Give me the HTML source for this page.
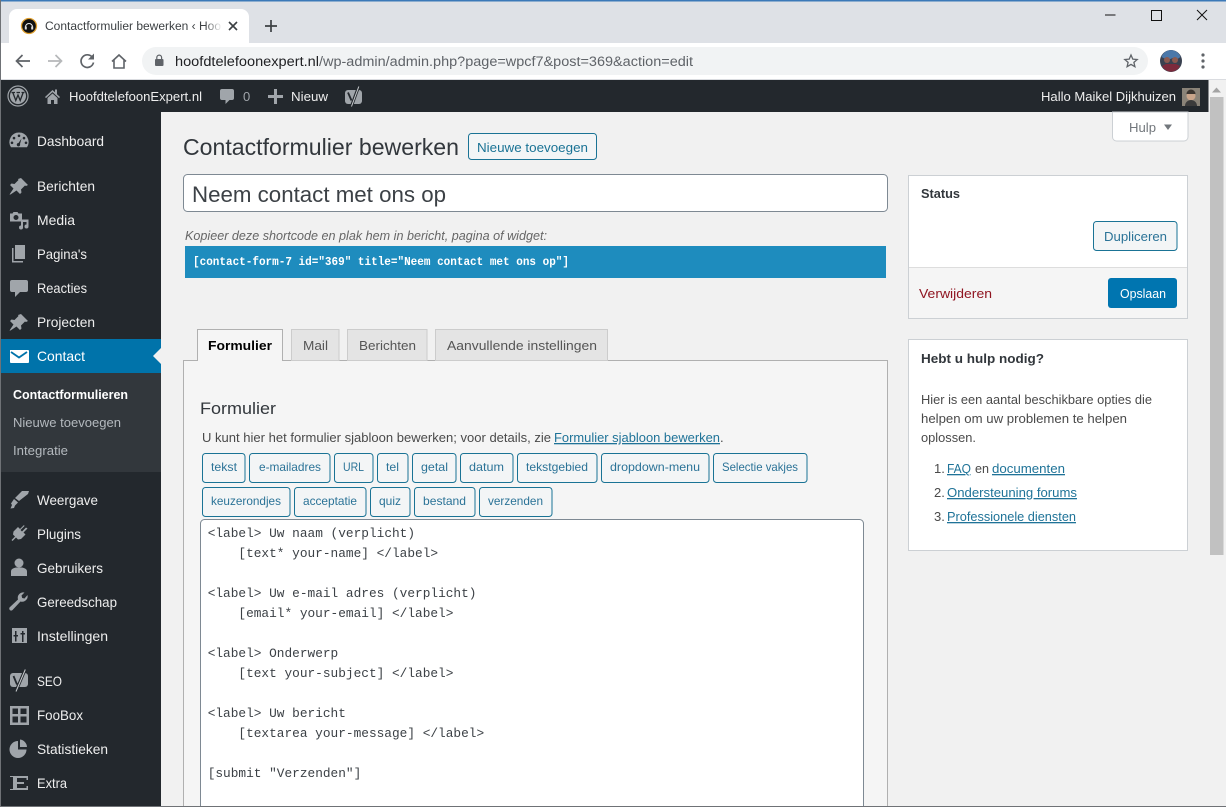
<!DOCTYPE html>
<html><head><meta charset="utf-8"><title>Contactformulier bewerken</title>
<style>
html,body{margin:0;padding:0;background:#f1f1f1;overflow:hidden}
svg{display:block;font-family:"Liberation Sans",sans-serif}
.m{font-size:14px;fill:#eeeeee}
.s{font-size:13px;fill:#b4b9be}
.i{fill:#a0a5aa}
.b{font-size:12px;fill:#2b7397}
.btn{fill:#f3f5f6;stroke:#1a7395}
.t{font-size:13px;fill:#4a4a4a}
.l{font-size:13px;fill:#1f7398;text-decoration:underline}
.c{font-family:"Liberation Mono",monospace;font-size:12.8px;fill:#3c4146}
</style></head><body>
<svg xmlns="http://www.w3.org/2000/svg" width="1226" height="807" viewBox="0 0 1226 807">
<defs><linearGradient id="fade" x1="0" x2="1"><stop offset="0" stop-color="#fff" stop-opacity="0"/><stop offset="1" stop-color="#fff"/></linearGradient></defs>
<rect width="1226" height="807" fill="#f1f1f1"/>
<!-- chrome -->
<rect width="1226" height="43" fill="#dee1e6"/>
<rect width="1226" height="1.5" fill="#3b79b8"/>
<path d="M9 43V17a8 8 0 0 1 8-8H241a8 8 0 0 1 8 8V43Z" fill="#fff"/>
<circle cx="29" cy="26" r="7.500" fill="#111" stroke="#e0a030" stroke-width="1.300"/>
<path d="M25.500 27a3.500 3.500 0 0 1 7 0" fill="none" stroke="#eee" stroke-width="1"/>
<rect x="24.800" y="26.500" width="2" height="3" fill="#ddd"/><rect x="31.200" y="26.500" width="2" height="3" fill="#ddd"/>
<text x="45" y="30" font-size="12.300" fill="#3c4043" textLength="176" lengthAdjust="spacingAndGlyphs">Contactformulier bewerken ‹ Hoo</text>
<rect x="205" y="18" width="17" height="16" fill="url(#fade)"/>
<path d="M229 22l8 8M237 22l-8 8" stroke="#3c4043" stroke-width="1.600"/>
<path d="M271 20v12M265 26h12" stroke="#3c4043" stroke-width="1.700"/>
<path d="M1105 15h10.500" stroke="#111" stroke-width="1"/>
<rect x="1151.500" y="10.500" width="10" height="10" fill="none" stroke="#111" stroke-width="1"/>
<path d="M1197 10l10 10M1207 10l-10 10" stroke="#111" stroke-width="1"/>
<rect y="43" width="1226" height="37" fill="#fff"/>
<path d="M30 61H17M22.500 55l-6 6 6 6" fill="none" stroke="#5f6368" stroke-width="1.700"/>
<path d="M48 61h13M55.500 55l6 6-6 6" fill="none" stroke="#b6b8ba" stroke-width="1.700"/>
<path d="M92.500 57.500a6.300 6.300 0 1 0 1 5" fill="none" stroke="#5f6368" stroke-width="1.700"/><path d="M94 53.500v6h-6Z" fill="#5f6368"/>
<path d="M112 61.500l7-6.500 7 6.500M114 60v8h10v-8" fill="none" stroke="#5f6368" stroke-width="1.600"/>
<rect x="142" y="47" width="1006" height="28" rx="14" fill="#f1f3f4"/>
<rect x="155" y="59" width="8.500" height="7" rx="1" fill="#5f6368"/><path d="M156.800 59v-1.500a2.400 2.400 0 0 1 4.800 0V59" fill="none" stroke="#5f6368" stroke-width="1.200"/>
<text x="175" y="66" font-size="13.500" fill="#202124" textLength="144" lengthAdjust="spacingAndGlyphs">hoofdtelefoonexpert.nl</text>
<text x="319" y="66" font-size="13.500" fill="#5f6368" textLength="374" lengthAdjust="spacingAndGlyphs">/wp-admin/admin.php?page=wpcf7&amp;post=369&amp;action=edit</text>
<path d="M1131 55l1.800 4.100 4.400.400-3.300 2.900 1 4.300-3.900-2.300-3.900 2.300 1-4.300-3.300-2.900 4.400-.400Z" fill="none" stroke="#5f6368" stroke-width="1.300"/>
<circle cx="1171" cy="61" r="11" fill="#3a4150"/><path d="M1161.500 57a10 10 0 0 1 19 0l-3 2h-4l-1-1-2 1h-5Z" fill="#4a78aa"/><circle cx="1167" cy="60" r="3" fill="#8c5a50"/><circle cx="1175" cy="60" r="3" fill="#8c5a50"/><path d="M1162 66a10 10 0 0 0 18 0l-4-2h-10Z" fill="#7c2a3c"/>
<circle cx="1203" cy="55" r="1.600" fill="#5f6368"/><circle cx="1203" cy="61" r="1.600" fill="#5f6368"/><circle cx="1203" cy="67" r="1.600" fill="#5f6368"/>
<rect y="79" width="1226" height="1" fill="#dadce0"/>
<!-- scrollbar -->
<rect x="1208" y="80" width="18" height="727" fill="#f1f1f1"/>
<path d="M1212 92.500l4.500-5 4.500 5Z" fill="#a3a3a3"/>
<rect x="1210" y="97" width="13.500" height="458" fill="#c1c1c1"/>
<!-- admin bar -->
<rect x="1" y="80" width="1207.500" height="32" fill="#23282d"/>
<circle cx="18" cy="96" r="10" fill="none" stroke="#a0a5aa" stroke-width="1.200"/>
<circle cx="18" cy="96" r="8" fill="#a0a5aa"/>
<path d="M12.800 92.500l3 8 2.200-5.500 2.200 5.500 3-8M11.500 92.500h3.500M16.500 92.500h3.500M21.500 92.500h3" fill="none" stroke="#23282d" stroke-width="1.300"/>
<path d="M45 97l7.500-7 2.500 2.300V89.500h2v4.700l3 2.800-1 1.100-6.500-6-6.500 6Zm2.500 1l5-4.500 5 4.500v6h-3.500v-4h-3v4h-3.500Z" class="i"/>
<text x="69" y="101" font-size="13" fill="#eee" textLength="133" lengthAdjust="spacingAndGlyphs">HoofdtelefoonExpert.nl</text>
<path d="M222 89h10a2 2 0 0 1 2 2v7a2 2 0 0 1-2 2h-2.500l-4 4v-4H222a2 2 0 0 1-2-2v-7a2 2 0 0 1 2-2Z" class="i"/>
<text x="243" y="101" font-size="13" fill="#a0a5aa">0</text>
<path d="M274 89h3v6h6v3h-6v6h-3v-6h-6v-3h6Z" class="i"/>
<text x="291" y="101" font-size="13" fill="#eee" textLength="37" lengthAdjust="spacingAndGlyphs">Nieuw</text>
<rect x="345" y="90" width="17" height="14" rx="3" class="i"/>
<path d="M348 92.500l3.500 8" stroke="#23282d" stroke-width="1.800" fill="none"/>
<path d="M358.500 87l-7 19" stroke="#23282d" stroke-width="3" fill="none"/>
<path d="M358.800 86.500l-7.300 20" stroke="#c8cbce" stroke-width="1" fill="none"/>
<text x="1041" y="101" font-size="13" fill="#eee" textLength="135" lengthAdjust="spacingAndGlyphs">Hallo Maikel Dijkhuizen</text>
<rect x="1182" y="88" width="18" height="18" fill="#8a8378"/><circle cx="1191" cy="96" r="4.500" fill="#c9a58b"/><path d="M1185 106a6 6 0 0 1 12 0Z" fill="#3b3b3b"/><path d="M1186.500 94a4.500 4.500 0 0 1 9 0Z" fill="#3b3530"/>
<!-- sidebar -->
<rect x="1" y="112" width="160" height="695" fill="#23282d"/>
<rect x="0" y="0" width="1" height="807" fill="#6f7276"/>
<rect x="1" y="339" width="160" height="34" fill="#0073aa"/>
<rect x="1" y="373" width="160" height="99" fill="#32373c"/>
<path d="M161 348l-8 8 8 8Z" fill="#f1f1f1"/>
<!-- sidebar icons -->
<path fill-rule="evenodd" d="M19 132.500a9.500 9.500 0 0 1 8 14.700H11a9.500 9.500 0 0 1 8-14.700Zm0 2a1.300 1.300 0 1 0 0 2.600 1.300 1.300 0 0 0 0-2.600Zm-5 2.300a1.300 1.300 0 1 0 0 2.600 1.300 1.300 0 0 0 0-2.600Zm10 0a1.300 1.300 0 1 0 0 2.600 1.300 1.300 0 0 0 0-2.600Zm-12 4.700a1.300 1.300 0 1 0 0 2.600 1.300 1.300 0 0 0 0-2.600Zm14 0a1.300 1.300 0 1 0 0 2.600 1.300 1.300 0 0 0 0-2.600Zm-4.500-3l-3 4.500a1.700 1.700 0 1 0 1.500 1Z" class="i"/>
<path d="M21 178l7 7-2 1-1-.5-4 4 .5 3-1.500 1.500-3.500-3.500-6 4-1 0 4-6-3.500-3.500 1.500-1.500 3 .5 4-4-.5-1Z" class="i"/>
<path fill-rule="evenodd" d="M10 213.500h2.500l1-1.500h4l1 1.500h3.500v8H10Zm6 1.500a2.500 2.500 0 1 0 0 5 2.500 2.500 0 0 0 0-5Z" class="i"/>
<path d="M21 219.500h7.500v7a2 2 0 1 1-2-2v-2.500h-3.500v5.500a2 2 0 1 1-2-2Z" class="i"/>
<path d="M15 245h10v14H15ZM12 248h1.500v13H23v1.500H12Z" class="i"/>
<path d="M12 280h14a2 2 0 0 1 2 2v8a2 2 0 0 1-2 2h-6l-5 5v-5h-3a2 2 0 0 1-2-2v-8a2 2 0 0 1 2-2Z" class="i"/>
<path d="M21 314l7 7-2 1-1-.5-4 4 .5 3-1.500 1.500-3.500-3.500-6 4-1 0 4-6-3.500-3.500 1.500-1.500 3 .5 4-4-.5-1Z" class="i"/>
<path d="M10 350h18a1 1 0 0 1 1 1v11a1 1 0 0 1-1 1H11a1 1 0 0 1-1-1Z" fill="#fff"/><path d="M11 352l8 5.500 8-5.500" fill="none" stroke="#0073aa" stroke-width="1.800"/>
<path d="M29 491l-1 3-9 7-4-3 7-7Zm-15 8l4 3.500-3 3-1 2.500-3.500 0.500 1.500-3.500-1-1.500Z" class="i"/>
<path d="M24 525l-4 4-2-2-4.500 4.500-.5 3 2 2-3.500 3.500 1 1 3.500-3.500 2 2 3-.5 4.500-4.500-2-2 4-4-1.500-1-4 4-1.500-1.500 4-4Z" class="i"/>
<circle cx="19" cy="563" r="4.500" class="i"/><path d="M11 576v-4.500c0-2.500 2.500-3.500 5-4h6c2.500.5 5 1.500 5 4v4.500Z" class="i"/>
<path d="M27.500 595a5.500 5.500 0 0 1-7 6.500l-7.500 8a2 2 0 1 1-3-2.500l8-7.500a5.500 5.500 0 0 1 6.500-7l-3 3 .7 2.500 2.300.5Z" class="i"/>
<path fill-rule="evenodd" d="M12 628h15v15H12Zm3 3v4h-1.500v1.500H15v5h1.500v-5H18V635h-1.500v-4Zm7 0v2h-1.500v1.500H22V642h1.500v-7.500H25V633h-1.500v-2Z" class="i"/>
<rect x="10" y="673" width="18" height="14" rx="3" class="i"/>
<path d="M13.500 676l3.500 8.500" stroke="#23282d" stroke-width="1.800" fill="none"/>
<path d="M25 670l-9 21" stroke="#23282d" stroke-width="3" fill="none"/>
<path d="M25.300 669.500l-9.300 22" stroke="#c8cbce" stroke-width="1" fill="none"/>
<path fill-rule="evenodd" d="M10 706h19v19H10Zm2.500 2.500v5.500h5.500v-5.500Zm8 0v5.500h6v-5.500Zm-8 8v6h5.500v-6Zm8 0v6h6v-6Z" class="i"/>
<path d="M18 741v8.500h8.500A8.500 8.500 0 1 1 18 741Z M20 739.500a8 8 0 0 1 7 7.500h-7Z" class="i"/>
<path d="M10 776h18v4h-1.500v-2h-9.500v4h7v2h-7v4h9.500v-2H28v4H10v-1h3v-12h-3Z" class="i"/>
<!-- sidebar text -->
<text class="m" x="37" y="146" textLength="67" lengthAdjust="spacingAndGlyphs">Dashboard</text>
<text class="m" x="37" y="191" textLength="58" lengthAdjust="spacingAndGlyphs">Berichten</text>
<text class="m" x="37" y="225" textLength="38" lengthAdjust="spacingAndGlyphs">Media</text>
<text class="m" x="37" y="259" textLength="50" lengthAdjust="spacingAndGlyphs">Pagina's</text>
<text class="m" x="37" y="293" textLength="50" lengthAdjust="spacingAndGlyphs">Reacties</text>
<text class="m" x="37" y="327" textLength="58" lengthAdjust="spacingAndGlyphs">Projecten</text>
<text class="m" x="37" y="361" textLength="48" lengthAdjust="spacingAndGlyphs" style="fill:#fff">Contact</text>
<text x="13" y="399" font-size="13" font-weight="700" fill="#fff" textLength="115" lengthAdjust="spacingAndGlyphs">Contactformulieren</text>
<text class="s" x="13" y="427" textLength="108" lengthAdjust="spacingAndGlyphs">Nieuwe toevoegen</text>
<text class="s" x="13" y="455" textLength="55" lengthAdjust="spacingAndGlyphs">Integratie</text>
<text class="m" x="37" y="505" textLength="61" lengthAdjust="spacingAndGlyphs">Weergave</text>
<text class="m" x="37" y="539" textLength="44" lengthAdjust="spacingAndGlyphs">Plugins</text>
<text class="m" x="37" y="573" textLength="66" lengthAdjust="spacingAndGlyphs">Gebruikers</text>
<text class="m" x="37" y="607" textLength="80" lengthAdjust="spacingAndGlyphs">Gereedschap</text>
<text class="m" x="37" y="641" textLength="71" lengthAdjust="spacingAndGlyphs">Instellingen</text>
<text class="m" x="37" y="686" textLength="25" lengthAdjust="spacingAndGlyphs">SEO</text>
<text class="m" x="37" y="720" textLength="46" lengthAdjust="spacingAndGlyphs">FooBox</text>
<text class="m" x="37" y="754" textLength="71" lengthAdjust="spacingAndGlyphs">Statistieken</text>
<text class="m" x="37" y="788" textLength="30" lengthAdjust="spacingAndGlyphs">Extra</text>
<!-- heading -->
<text x="183" y="155" font-size="23" fill="#32373c" textLength="276" lengthAdjust="spacingAndGlyphs">Contactformulier bewerken</text>
<rect x="468.500" y="133.500" width="128" height="26" rx="3" class="btn"/>
<text x="477" y="152" font-size="13" fill="#1a7395" textLength="111" lengthAdjust="spacingAndGlyphs">Nieuwe toevoegen</text>
<rect x="183.500" y="174.500" width="704" height="37" rx="4" fill="#fff" stroke="#7e8993"/>
<text x="192" y="202" font-size="22" fill="#3c4146" textLength="254" lengthAdjust="spacingAndGlyphs">Neem contact met ons op</text>
<text x="185" y="240" font-size="13" font-style="italic" fill="#666" textLength="362" lengthAdjust="spacingAndGlyphs">Kopieer deze shortcode en plak hem in bericht, pagina of widget:</text>
<rect x="185" y="246" width="701" height="32" fill="#1e8cbe"/>
<text x="193" y="265" font-family="Liberation Mono,monospace" font-size="12" font-weight="700" fill="#fff" textLength="376" lengthAdjust="spacingAndGlyphs">[contact-form-7 id="369" title="Neem contact met ons op"]</text>
<!-- panel + tabs -->
<rect x="183.500" y="360.500" width="704" height="470" fill="#f5f5f5" stroke="#b0b0b0"/>
<rect x="291.500" y="329.500" width="47.500" height="31" fill="#e4e4e4" stroke="#ccc"/>
<rect x="347.500" y="329.500" width="79.500" height="31" fill="#e4e4e4" stroke="#ccc"/>
<rect x="435.500" y="329.500" width="172" height="31" fill="#e4e4e4" stroke="#ccc"/>
<path d="M197.500 361V329.500H282.500V361" fill="#f5f5f5" stroke="#b0b0b0"/>
<text x="208" y="350" font-size="13" font-weight="700" fill="#000" textLength="64" lengthAdjust="spacingAndGlyphs">Formulier</text>
<text x="303" y="350" font-size="13" fill="#555" textLength="25" lengthAdjust="spacingAndGlyphs">Mail</text>
<text x="359" y="350" font-size="13" fill="#555" textLength="57" lengthAdjust="spacingAndGlyphs">Berichten</text>
<text x="447" y="350" font-size="13" fill="#555" textLength="150" lengthAdjust="spacingAndGlyphs">Aanvullende instellingen</text>
<text x="200" y="414" font-size="17" fill="#32373c" textLength="76" lengthAdjust="spacingAndGlyphs">Formulier</text>
<text class="t" x="202" y="442" textLength="349" lengthAdjust="spacingAndGlyphs">U kunt hier het formulier sjabloon bewerken; voor details, zie</text>
<text class="l" x="554" y="442" textLength="166" lengthAdjust="spacingAndGlyphs">Formulier sjabloon bewerken</text>
<text class="t" x="720" y="442">.</text>
<!-- tag buttons -->
<rect class="btn" x="202.500" y="453.500" width="42.500" height="29" rx="3"/><text class="b" x="211" y="471" textLength="26" lengthAdjust="spacingAndGlyphs">tekst</text>
<rect class="btn" x="249.500" y="453.500" width="80.500" height="29" rx="3"/><text class="b" x="259" y="471" textLength="62" lengthAdjust="spacingAndGlyphs">e-mailadres</text>
<rect class="btn" x="334.500" y="453.500" width="38.500" height="29" rx="3"/><text class="b" x="343" y="471" textLength="21" lengthAdjust="spacingAndGlyphs">URL</text>
<rect class="btn" x="377.500" y="453.500" width="30.500" height="29" rx="3"/><text class="b" x="386" y="471" textLength="13" lengthAdjust="spacingAndGlyphs">tel</text>
<rect class="btn" x="412.500" y="453.500" width="43.500" height="29" rx="3"/><text class="b" x="421" y="471" textLength="27" lengthAdjust="spacingAndGlyphs">getal</text>
<rect class="btn" x="460.500" y="453.500" width="52.500" height="29" rx="3"/><text class="b" x="469" y="471" textLength="35" lengthAdjust="spacingAndGlyphs">datum</text>
<rect class="btn" x="517.500" y="453.500" width="79.500" height="29" rx="3"/><text class="b" x="526" y="471" textLength="62" lengthAdjust="spacingAndGlyphs">tekstgebied</text>
<rect class="btn" x="601.500" y="453.500" width="107.500" height="29" rx="3"/><text class="b" x="610" y="471" textLength="90" lengthAdjust="spacingAndGlyphs">dropdown-menu</text>
<rect class="btn" x="713.500" y="453.500" width="93.500" height="29" rx="3"/><text class="b" x="722" y="471" textLength="76" lengthAdjust="spacingAndGlyphs">Selectie vakjes</text>
<rect class="btn" x="202.500" y="487.500" width="87.500" height="29" rx="3"/><text class="b" x="211" y="505" textLength="70" lengthAdjust="spacingAndGlyphs">keuzerondjes</text>
<rect class="btn" x="294.500" y="487.500" width="71.500" height="29" rx="3"/><text class="b" x="303" y="505" textLength="54" lengthAdjust="spacingAndGlyphs">acceptatie</text>
<rect class="btn" x="370.500" y="487.500" width="39.500" height="29" rx="3"/><text class="b" x="379" y="505" textLength="22" lengthAdjust="spacingAndGlyphs">quiz</text>
<rect class="btn" x="414.500" y="487.500" width="60.500" height="29" rx="3"/><text class="b" x="423" y="505" textLength="43" lengthAdjust="spacingAndGlyphs">bestand</text>
<rect class="btn" x="479.500" y="487.500" width="72.500" height="29" rx="3"/><text class="b" x="488" y="505" textLength="55" lengthAdjust="spacingAndGlyphs">verzenden</text>
<!-- textarea -->
<rect x="200.500" y="519.500" width="663" height="320" rx="4" fill="#fff" stroke="#7e8993"/>
<text class="c" x="207.700" y="537">&lt;label&gt; Uw naam (verplicht)</text>
<text class="c" x="238.400" y="557">[text* your-name] &lt;/label&gt;</text>
<text class="c" x="207.700" y="597">&lt;label&gt; Uw e-mail adres (verplicht)</text>
<text class="c" x="238.400" y="617">[email* your-email] &lt;/label&gt;</text>
<text class="c" x="207.700" y="657">&lt;label&gt; Onderwerp</text>
<text class="c" x="238.400" y="677">[text your-subject] &lt;/label&gt;</text>
<text class="c" x="207.700" y="717">&lt;label&gt; Uw bericht</text>
<text class="c" x="238.400" y="737">[textarea your-message] &lt;/label&gt;</text>
<text class="c" x="207.700" y="777">[submit "Verzenden"]</text>
<!-- help tab -->
<path d="M1112.500 112V137a4 4 0 0 0 4 4H1184a4 4 0 0 0 4-4V112Z" fill="#fff" stroke="#ccd0d4"/>
<text x="1129" y="132" font-size="13" fill="#72777c" textLength="27" lengthAdjust="spacingAndGlyphs">Hulp</text>
<path d="M1164 124.500h8l-4 5.500Z" fill="#72777c"/>
<!-- status box -->
<rect x="908.500" y="175.500" width="279" height="143" fill="#fff" stroke="#ccd0d4"/>
<rect x="909" y="268" width="278" height="50" fill="#f5f5f5"/>
<path d="M909 267.500h278" stroke="#dddddd"/>
<text x="921" y="198" font-size="13" font-weight="700" fill="#32373c" textLength="39" lengthAdjust="spacingAndGlyphs">Status</text>
<rect class="btn" x="1093.500" y="221.500" width="83.500" height="29" rx="3"/>
<text x="1104" y="241" font-size="13" fill="#2b7397" textLength="63" lengthAdjust="spacingAndGlyphs">Dupliceren</text>
<text x="919" y="298" font-size="13" fill="#8f1420" textLength="73" lengthAdjust="spacingAndGlyphs">Verwijderen</text>
<rect x="1108" y="278" width="69" height="30" rx="3" fill="#0075b0"/>
<text x="1120" y="298" font-size="13" fill="#fff" textLength="46" lengthAdjust="spacingAndGlyphs">Opslaan</text>
<!-- help box -->
<rect x="908.500" y="339.500" width="279" height="211" fill="#fff" stroke="#ccd0d4"/>
<text x="921" y="363" font-size="13" font-weight="700" fill="#32373c" textLength="123" lengthAdjust="spacingAndGlyphs">Hebt u hulp nodig?</text>
<text class="t" x="921" y="404" textLength="231" lengthAdjust="spacingAndGlyphs">Hier is een aantal beschikbare opties die</text>
<text class="t" x="921" y="423" textLength="206" lengthAdjust="spacingAndGlyphs">helpen om uw problemen te helpen</text>
<text class="t" x="921" y="442" textLength="55" lengthAdjust="spacingAndGlyphs">oplossen.</text>
<text class="t" x="934" y="473">1.</text><text class="l" x="947" y="473" textLength="24" lengthAdjust="spacingAndGlyphs">FAQ</text><text class="t" x="975" y="473" textLength="14" lengthAdjust="spacingAndGlyphs">en</text><text class="l" x="992" y="473" textLength="73" lengthAdjust="spacingAndGlyphs">documenten</text>
<text class="t" x="934" y="497">2.</text><text class="l" x="947" y="497" textLength="130" lengthAdjust="spacingAndGlyphs">Ondersteuning forums</text>
<text class="t" x="934" y="521">3.</text><text class="l" x="947" y="521" textLength="129" lengthAdjust="spacingAndGlyphs">Professionele diensten</text>
<rect y="806" width="1226" height="1" fill="#6f7276"/>
</svg>
</body></html>
